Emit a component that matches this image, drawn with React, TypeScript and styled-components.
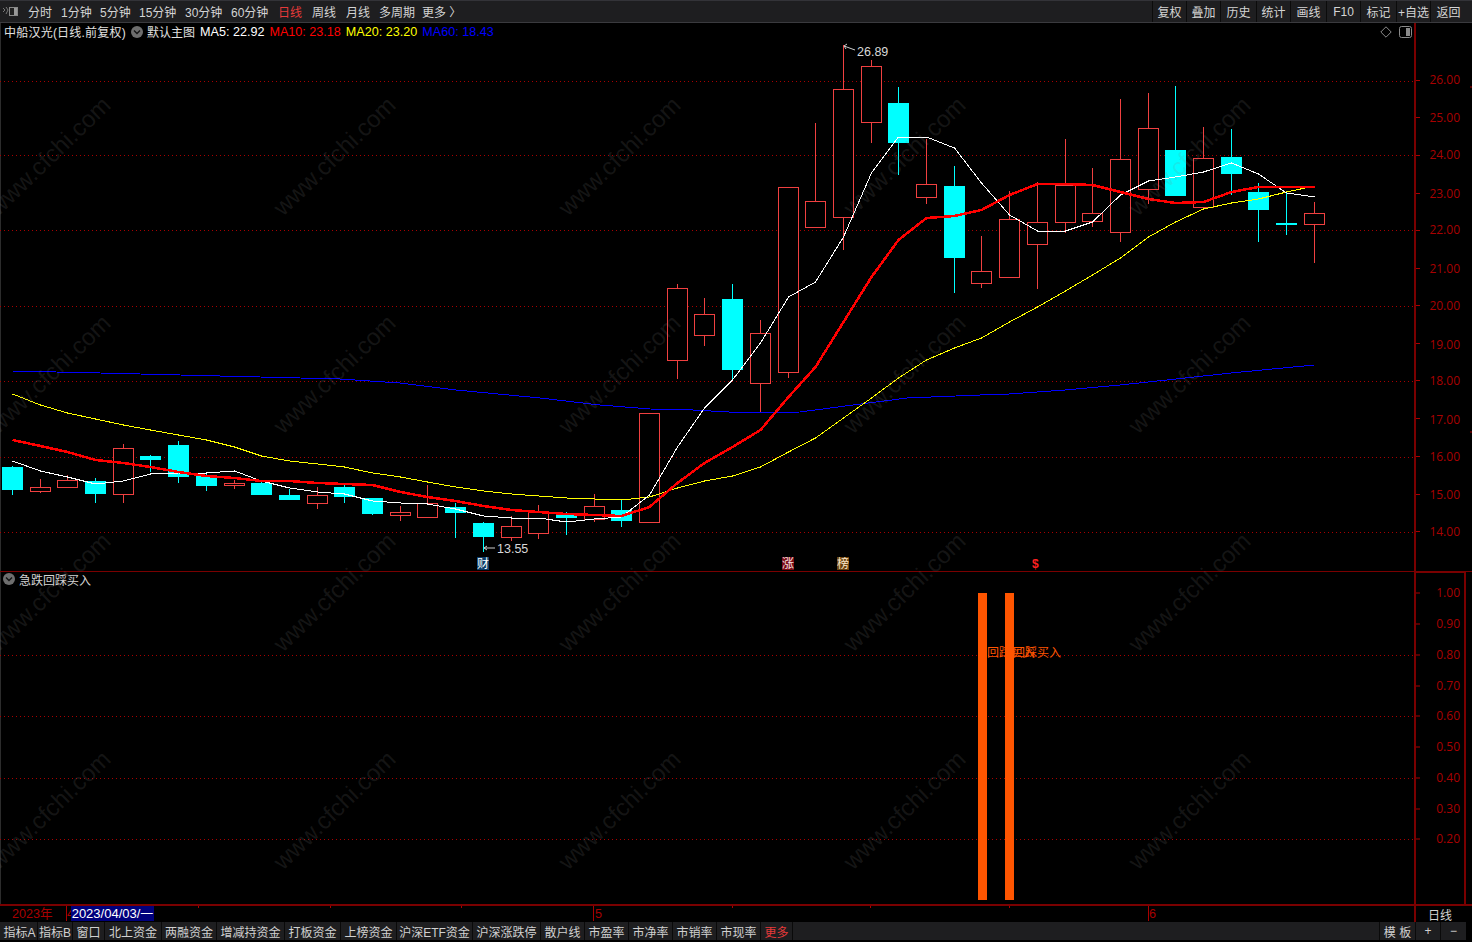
import React from "react";
import styled, { createGlobalStyle } from "styled-components";

const UI = `"Liberation Sans", "Noto Sans CJK SC", sans-serif`;

const Global = createGlobalStyle`
  html, body { margin: 0; padding: 0; background: #000; overflow: hidden; }
  body { font-family: ${UI}; }
`;

const Root = styled.div`
  width: 1472px;
  height: 942px;
  background: #000;
  display: flex;
  flex-direction: column;
  position: relative;
  overflow: hidden;
`;

const TopBar = styled.div`
  height: 23px;
  box-sizing: border-box;
  background: #1e1e20;
  border-top: 1px solid #333338;
  border-bottom: 1px solid #3a3a3e;
  display: flex;
  align-items: stretch;
  justify-content: space-between;
  padding-right: 6px;
  flex: none;
`;
const TopLeft = styled.div`
  display: flex;
  align-items: center;
  padding-left: 2px;
`;
const LogoBox = styled.span`
  width: 16px;
  height: 11px;
  margin-right: 10px;
  display: flex;
`;
const PeriodTab = styled.span<{ $active?: boolean; $w: number }>`
  width: ${(p) => p.$w}px;
  font-size: 12px;
  white-space: nowrap;
  color: ${(p) => (p.$active ? "#e63a3a" : "#d4d4d4")};
`;
const TopRight = styled.div`
  display: flex;
  align-items: stretch;
`;
const ToolButton = styled.span<{ $w: number }>`
  width: ${(p) => p.$w}px;
  box-sizing: border-box;
  border-left: 1px solid #0b0b0b;
  display: flex;
  align-items: center;
  justify-content: center;
  font-size: 12px;
  white-space: nowrap;
  color: #d4d4d4;
`;

const Pane = styled.div<{ $h: number }>`
  height: ${(p) => p.$h}px;
  flex: none;
  display: grid;
  grid-template-columns: 1414px 58px;
  position: relative;
`;
const MainPane = styled(Pane)`
  border-bottom: 1px solid #7a0000;
`;
const Plot = styled.svg`
  display: block;
  width: 1414px;
  height: 100%;
`;
const MainAxis = styled.svg`
  display: block;
  width: 58px;
  height: 100%;
  box-sizing: border-box;
  border-left: 2px solid #7a0000;
`;
const BoxAxis = styled.svg`
  display: block;
  width: 52px;
  height: 100%;
  box-sizing: border-box;
  border-left: 2px solid #7a0000;
  border-right: 2px solid #7a0000;
  border-top: 1px solid #7a0000;
`;
const Legend = styled.div`
  position: absolute;
  left: 4px;
  top: 0;
  height: 17px;
  display: flex;
  align-items: center;
  font-size: 12px;
  letter-spacing: 0.22px;
  white-space: nowrap;
  color: #e0e0e0;
`;
const LegendName = styled.span`
  letter-spacing: 0;
  margin-right: 5px;
`;
const LegendMa = styled.span<{ $c: string }>`
  font-size: 12.6px;
  letter-spacing: 0;
  margin-right: 5px;
  color: ${(p) => p.$c};
`;
const Chevron = styled.svg`
  width: 12px;
  height: 12px;
  margin: 0 4px 0 5px;
  flex: none;
`;
const PaneTools = styled.div`
  position: absolute;
  left: 1380px;
  top: 3px;
  display: flex;
  align-items: center;
  gap: 7px;
`;
const IndicatorTitle = styled.div`
  position: absolute;
  left: 2px;
  top: 0;
  height: 14px;
  display: flex;
  align-items: center;
  font-size: 12px;
  color: #d4d4d4;
  ${Chevron} { margin: 0 4px 0 1px; }
`;
const IndicatorPane = styled(Pane)`
  border-bottom: 2px solid #7a0000;
  grid-template-columns: 1414px 52px 6px;
`;
const BlankGutter = styled.div`
  background: #000;
`;

const TimeRow = styled.div`
  height: 16px;
  flex: none;
  display: grid;
  grid-template-columns: 1414px 52px 6px;
`;
const TimeAxis = styled.div`
  position: relative;
  overflow: hidden;
`;
const TimeSvg = styled.svg`
  display: block;
  width: 1414px;
  height: 16px;
`;
const DateChip = styled.span`
  position: absolute;
  left: 71px;
  top: 0;
  width: 83px;
  height: 15px;
  line-height: 15px;
  background: #00007c;
  color: #fff;
  font-size: 13px;
  white-space: nowrap;
  text-align: center;
`;
const PeriodCell = styled.div`
  box-sizing: border-box;
  border-left: 2px solid #7a0000;
  padding-right: 2px;
  display: flex;
  align-items: center;
  justify-content: center;
  color: #d4d4d4;
  font-size: 12px;
`;

const TabBar = styled.div`
  height: 18px;
  flex: none;
  margin-right: 6px;
  background: #1e1e20;
  display: flex;
  align-items: stretch;
  padding-left: 2px;
`;
const Tab = styled.span<{ $w: number; $hot?: boolean }>`
  width: ${(p) => p.$w}px;
  flex: none;
  box-sizing: border-box;
  border-right: 1px solid #0a0a0a;
  display: flex;
  align-items: center;
  justify-content: center;
  font-size: 12px;
  white-space: nowrap;
  color: ${(p) => (p.$hot ? "#e63a3a" : "#d0d0d0")};
`;
const TabSpacer = styled.span`
  flex: 1;
`;
const EndTab = styled(Tab)`
  border-right: none;
  border-left: 1px solid #0a0a0a;
`;

const Watermarks = styled.svg`
  position: absolute;
  left: 0;
  top: 0;
  width: 1472px;
  height: 942px;
  pointer-events: none;
`;

type C = [number, number, number, number, 0 | 1];
// high, low, body top, body bottom, 1 = falling (cyan)
const candles: C[] = [
  [466, 495, 467, 490, 1],[479, 493, 487, 491, 0],[475, 487, 480, 487, 0],[478, 503, 481, 494, 1],
  [444, 503, 448, 494, 0],[455, 472, 456, 460, 1],[441, 483, 445, 477, 1],[473, 491, 476, 486, 1],
  [480, 489, 483, 485, 0],[481, 495, 483, 495, 1],[489, 500, 495, 500, 1],[487, 509, 495, 503, 0],
  [484, 503, 487, 497, 1],[498, 515, 498, 514, 1],[506, 521, 512, 515, 0],[485, 517, 503, 517, 0],
  [503, 538, 507, 513, 1],[522, 552, 523, 537, 1],[516, 541, 526, 537, 0],[505, 539, 511, 533, 0],
  [512, 535, 514, 518, 1],[494, 522, 506, 519, 0],[499, 527, 510, 521, 1],[413, 522, 413, 522, 0],
  [284, 379, 288, 360, 0],[298, 346, 314, 335, 0],[284, 379, 299, 370, 1],[320, 413, 333, 383, 0],
  [187, 378, 187, 372, 0],[123, 227, 201, 227, 0],[45, 250, 89, 217, 0],[60, 143, 66, 122, 0],
  [87, 175, 103, 143, 1],[139, 204, 184, 197, 0],[166, 293, 186, 258, 1],[236, 288, 271, 283, 0],
  [191, 277, 219, 277, 0],[182, 289, 222, 244, 0],[139, 233, 185, 222, 0],[168, 227, 213, 221, 0],
  [99, 242, 159, 232, 0],[93, 204, 128, 189, 0],[86, 196, 150, 196, 1],[127, 207, 158, 207, 0],
  [129, 195, 157, 174, 1],[183, 242, 192, 210, 1],[193, 235, 223, 225, 1],[202, 263, 213, 224, 0],
];
const cx = (i: number) => Math.floor(12.45 + 27.7 * i) + 0.5;

const ma5 = [461,471,477,484,481,474,473,473,471,481,488,492,494,501,503,504,509,516,518,518,522,519,517,495,447,408,380,343,297,282,237,173,137,137,148,183,215,231,231,222,195,181,177,172,163,174,193,197];
const ma10 = [440,446,452,460,463,467,472,476,478,481,481,483,484,485,492,497,501,506,510,512,514,515,516,507,483,463,447,430,397,367,322,277,240,218,216,210,195,184,184,185,192,199,203,202,192,187,187,187];
const ma20 = [394,405,413,419,425,430,435,440,447,456,461,464,467,473,477,482,487,491,494,496,498,499,500,497,488,481,476,467,452,438,418,398,378,360,348,338,322,307,291,275,258,237,222,209,203,199,192,186];
const ma60: [number, number][] = [[12,371],[100,373],[180,375],[260,377],[340,379],[400,383],[456,390],[540,398],[600,405],[650,409],[693,410],[747,413],[800,412],[853,405],[907,398],[980,395],[1009,394],[1065,390],[1120,385],[1176,379],[1231,373],[1314,365]];

const pts = (a: number[]) => a.map((y, i) => `${cx(i)},${y}`).join(" ");

const gridMain = [81, 155.5, 230.5, 306, 381, 457, 532];
const gridInd = [655, 716, 778, 839];
const priceLabels: [string, number, number][] = [["26.00",81,80],["25.00",118,118],["24.00",156,155],["23.00",194,194],["22.00",231,230],["21.00",269,269],["20.00",306,306],["19.00",344,345],["18.00",381,381],["17.00",419,420],["16.00",457,457],["15.00",495,495],["14.00",532,532]];
const indLabels: [string, number][] = [["1.00",593],["0.90",624],["0.80",655],["0.70",686],["0.60",716],["0.50",747],["0.40",778],["0.30",809],["0.20",839]];

const periods: [string, number, boolean?][] = [["分时",33],["1分钟",39],["5分钟",39],["15分钟",46],["30分钟",46],["60分钟",47],["日线",34,true],["周线",34],["月线",33],["多周期",43],["更多 〉",40]];
const tools: [string, number][] = [["复权",34],["叠加",34],["历史",36],["统计",34],["画线",36],["F10",34],["标记",36],["+自选",34],["返回",36]];
const tabs: [string, number, boolean?][] = [["指标A",36],["指标B",35],["窗口",32],["北上资金",57],["两融资金",55],["增减持资金",68],["打板资金",56],["上榜资金",56],["沪深ETF资金",76],["沪深涨跌停",68],["散户线",44],["市盈率",44],["市净率",44],["市销率",44],["市现率",44],["更多",32,true]];

const wmX = [-2, 283, 568, 853, 1138];
const wmY = [217, 435, 653, 871];

const Down = () => (
  <Chevron viewBox="0 0 12 12">
    <circle cx="6" cy="6" r="6" fill="#6e6e6e" />
    <path d="M3 4.6 6 7.6 9 4.6" fill="none" stroke="#151515" strokeWidth="1.4" />
  </Chevron>
);

export default function App() {
  return (
    <Root>
      <Global />
      <TopBar>
        <TopLeft>
          <LogoBox>
            <svg width="16" height="11" viewBox="0 0 16 11">
              <path d="M1 2 3 4 1 6M4 1 6 4 4 8" fill="none" stroke="#777" strokeWidth="1" />
              <rect x="7.5" y="1.5" width="8" height="8" fill="#222" stroke="#888" />
              <rect x="12" y="2" width="3" height="7" fill="#999" />
            </svg>
          </LogoBox>
          {periods.map(([t, w, a]) => (
            <PeriodTab key={t} $w={w} $active={a}>{t}</PeriodTab>
          ))}
        </TopLeft>
        <TopRight>
          {tools.map(([t, w]) => (
            <ToolButton key={t} $w={w}>{t}</ToolButton>
          ))}
        </TopRight>
      </TopBar>

      <MainPane $h={548}>
        <Plot viewBox="0 23 1414 548" shapeRendering="crispEdges">
          <line x1="0.5" y1="23" x2="0.5" y2="571" stroke="#2c2c2c" />
          {gridMain.map((y) => (
            <line key={y} x1="0" x2="1414" y1={Math.floor(y) + 0.5} y2={Math.floor(y) + 0.5} stroke="#a80000" strokeDasharray="1 3" />
          ))}
          {candles.map(([hi, lo, t, b, down], i) => {
            const x = cx(i);
            const col = down ? "#00ffff" : "#f04040";
            return (
              <g key={i}>
                <line x1={x} x2={x} y1={hi} y2={lo} stroke={col} />
                {down ? (
                  <rect x={x - 10.5} y={t} width="21" height={Math.max(b - t, 2)} fill={col} />
                ) : (
                  <rect x={x - 10} y={t + 0.5} width="20" height={b - t} fill="#000" stroke={col} />
                )}
              </g>
            );
          })}
          <polyline points={ma60.map(([x, y]) => `${x},${y}`).join(" ")} fill="none" stroke="#0000ff" strokeWidth="1" />
          <polyline points={pts(ma20)} fill="none" stroke="#ffff00" strokeWidth="1" />
          <polyline points={pts(ma5)} fill="none" stroke="#ffffff" strokeWidth="1" />
          <polyline points={pts(ma10)} fill="none" stroke="#ff0000" strokeWidth="2.5" />
          <g shapeRendering="geometricPrecision">
            <path d="M844 46 855 50M844 46l3-2M844 46l2 3" fill="none" stroke="#ccc" strokeWidth="1" />
            <text x="857" y="56" fontSize="12.5" fill="#d8d8d8" fontFamily={UI}>26.89</text>
            <path d="M484 548H495M484 548l3-2M484 548l3 2" fill="none" stroke="#ccc" strokeWidth="1" />
            <text x="497" y="553" fontSize="12.5" fill="#d8d8d8" fontFamily={UI}>13.55</text>
            <rect x="477" y="557" width="12" height="13" fill="#0c3c68" />
            <text x="477" y="568" fontSize="12" fill="#fff" fontFamily={UI}>财</text>
            <rect x="782" y="557" width="12" height="13" fill="#7a0a14" />
            <text x="782" y="568" fontSize="12" fill="#f4e0e0" fontFamily={UI}>涨</text>
            <rect x="837" y="557" width="12" height="13" fill="#6a4210" />
            <text x="837" y="568" fontSize="12" fill="#ffe8c8" fontFamily={UI}>榜</text>
            <text x="1032" y="568" fontSize="12" fontWeight="700" fill="#ff2020" fontFamily={UI}>$</text>
          </g>
        </Plot>
        <MainAxis viewBox="0 23 56 548">
          <path d="M54 87h2M54 432h2" stroke="#a80000" />
          {priceLabels.map(([t, y, ly]) => (
            <g key={t}>
              <line x1="0" x2="4" y1={y - 0.5} y2={y - 0.5} stroke="#a80000" />
              <text x="44" y={ly + 4} textAnchor="end" fontSize="12" fill="#a80000" fontFamily="'Open Sans', sans-serif">{t}</text>
            </g>
          ))}
        </MainAxis>
        <Legend>
          中船汉光(日线.前复权)
          <Down />
          <LegendName>默认主图</LegendName>
          <LegendMa $c="#ffffff">MA5: 22.92</LegendMa>
          <LegendMa $c="#ff0000">MA10: 23.18</LegendMa>
          <LegendMa $c="#ffff00">MA20: 23.20</LegendMa>
          <LegendMa $c="#0000ff">MA60: 18.43</LegendMa>
        </Legend>
        <PaneTools>
          <svg width="12" height="12" viewBox="0 0 12 12">
            <path d="M6 .8 11.2 6 6 11.2.8 6Z" fill="none" stroke="#8a8a8a" />
          </svg>
          <svg width="13" height="12" viewBox="0 0 13 12">
            <rect x=".5" y=".5" width="12" height="11" rx="2" fill="none" stroke="#8a8a8a" />
            <rect x="7" y="2" width="4" height="8" fill="#8a8a8a" />
          </svg>
        </PaneTools>
      </MainPane>

      <IndicatorPane $h={332}>
        <Plot viewBox="0 572 1414 332" shapeRendering="crispEdges">
          <line x1="0.5" y1="572" x2="0.5" y2="904" stroke="#2c2c2c" />
          {gridInd.map((y) => (
            <line key={y} x1="0" x2="1414" y1={y + 0.5} y2={y + 0.5} stroke="#a80000" strokeDasharray="1 3" />
          ))}
          <g shapeRendering="geometricPrecision" fontFamily={UI} fontSize="12" fill="#ff5500">
            <text x="987" y="657">回踩买入</text>
            <text x="1013" y="657">回踩买入</text>
          </g>
          <rect x="978" y="593" width="9" height="307" fill="#ff5500" />
          <rect x="1005" y="593" width="9" height="307" fill="#ff5500" />
        </Plot>
        <BoxAxis viewBox="0 573 48 331">
          {indLabels.map(([t, y]) => (
            <g key={t}>
              <line x1="0" x2="4" y1={y} y2={y} stroke="#a80000" />
              <text x="44" y={y + 4} textAnchor="end" fontSize="12" fill="#a80000" fontFamily="'Open Sans', sans-serif">{t}</text>
            </g>
          ))}
        </BoxAxis>
        <BlankGutter />
        <IndicatorTitle>
          <Down />
          急跌回踩买入
        </IndicatorTitle>
      </IndicatorPane>

      <TimeRow>
        <TimeAxis>
          <TimeSvg viewBox="0 0 1414 16" shapeRendering="crispEdges">
            <path d="M198.5 0v2M330.5 0v2M461.5 0v2M732.5 0v2M870.5 0v2M1009.5 0v2" stroke="#a80000" />
            <path d="M66.5 0v15M593.5 0v15M1148.5 0v15" stroke="#a80000" />
            <g shapeRendering="geometricPrecision" fontFamily={UI} fontSize="12.6" fill="#a80000">
              <text x="12" y="12">2023年</text>
              <text x="67" y="12">4</text>
              <text x="595" y="12">5</text>
              <text x="1149" y="12">6</text>
            </g>
          </TimeSvg>
          <DateChip>2023/04/03/一</DateChip>
        </TimeAxis>
        <PeriodCell>日线</PeriodCell>
      </TimeRow>

      <TabBar>
        {tabs.map(([t, w, hot]) => (
          <Tab key={t} $w={w} $hot={hot}>{t}</Tab>
        ))}
        <TabSpacer />
        <EndTab $w={36}>模 板</EndTab>
        <EndTab $w={25}>+</EndTab>
        <EndTab $w={26}>−</EndTab>
      </TabBar>

      <Watermarks viewBox="0 0 1472 942">
        {wmX.flatMap((x) =>
          wmY.map((y) => (
            <text
              key={`${x}-${y}`}
              x={x}
              y={y}
              transform={`rotate(-44 ${x} ${y})`}
              fontFamily="'Liberation Sans', sans-serif"
              fontSize="24"
              fill="rgba(130,130,130,0.17)"
            >
              www.cfchi.com
            </text>
          ))
        )}
      </Watermarks>
    </Root>
  );
}
